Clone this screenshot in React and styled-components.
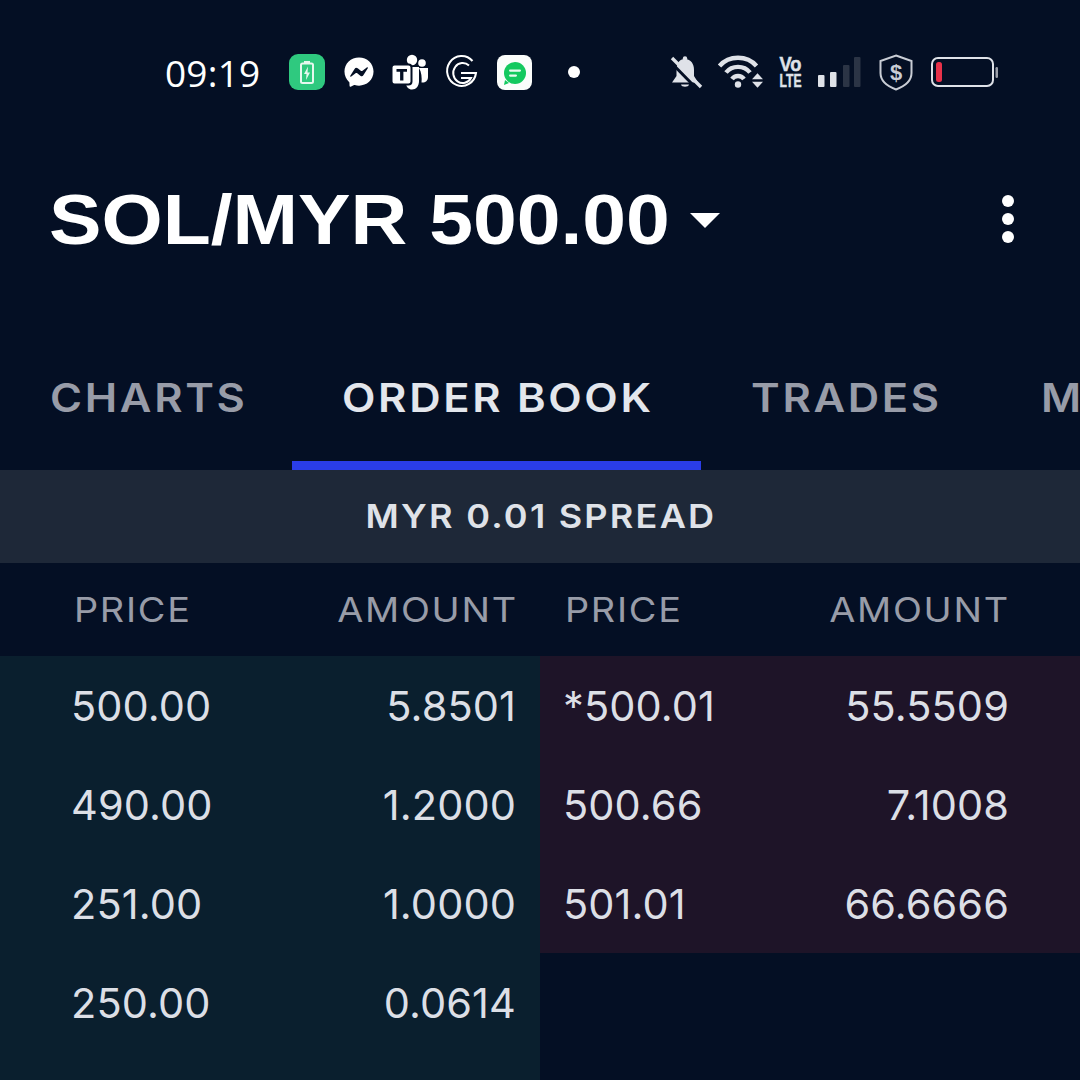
import React from "react";
import styled, { createGlobalStyle } from "styled-components";
import { FaFacebookMessenger } from "react-icons/fa";

const Global = createGlobalStyle`
  html, body { margin: 0; padding: 0; background: #040f24; }
  * { box-sizing: border-box; }
`;

const Page = styled.div`
  width: 1080px; height: 1080px; overflow: hidden; background: #040f24;
  color: #fff; font-family: Inter, "Liberation Sans", sans-serif;
  display: flex; flex-direction: column;
`;
const StatusBar = styled.div`
  height: 145px; display: flex; align-items: center; padding: 0 0 1px 165px;
`;
const Time = styled.span`
  font-size: 37px; font-weight: 500; width: 95px; letter-spacing: 0.2px; white-space: nowrap; color: #fff;
  font-family: "Open Sans", Inter, sans-serif;
`;
const Slot = styled.span`
  display: flex; align-items: center; justify-content: center; flex: none;
  width: ${p => p.$w}px; margin-left: ${p => p.$ml}px; color: ${p => p.$c || "#fff"};
  svg { overflow: visible; }
`;
const TitleRow = styled.div`
  height: 148px; display: flex; align-items: center; padding: 0 66px 0 49px;
`;
const Title = styled.h1`
  margin: 0; width: 618px; font-family: "Liberation Sans", Arial, sans-serif;
  font-size: 71px; font-weight: 700; white-space: nowrap; line-height: 1;
  transform: scaleX(1.108); transform-origin: left center;
`;
const Caret = styled.span`
  width: 0; height: 0; margin-left: 23px; margin-top: 2px;
  border-left: 15px solid transparent; border-right: 15px solid transparent; border-top: 15px solid #fff;
`;
const Dots = styled.div`
  margin-left: auto; display: flex; flex-direction: column; gap: 6px;
`;
const Dot = styled.span`
  width: 12px; height: 12px; border-radius: 50%; background: #fff;
`;
const Tabs = styled.div`
  height: 177px; display: flex; white-space: nowrap;
`;
const Tab = styled.div`
  flex: none; width: ${p => p.$w}px; height: 100%; padding: 80px 0 0 50px;
  color: ${p => (p.$active ? "#e3e6ec" : "#989ca8")};
  border-bottom: 9px solid ${p => (p.$active ? "#2a3de8" : "transparent")};
`;
const TabLabel = styled.span`
  display: inline-block; font-size: 39px; font-weight: 600; letter-spacing: 2.4px; line-height: 50px;
  transform: scaleX(1.115); transform-origin: left center;
`;
const Spread = styled.div`
  height: 93px; background: #1e2838; color: #dfe2e8; display: flex; align-items: center; justify-content: center;
  padding-left: 2px;
`;
const SpreadLabel = styled.span`
  font-size: 32.5px; font-weight: 600; letter-spacing: 2px; transform: scaleX(1.11);
`;
const Book = styled.div`
  display: grid; grid-template-columns: 540px 540px; flex: 1; min-height: 0;
`;
const Side = styled.div`
  min-width: 0;
`;
const HeadRow = styled.div`
  height: 93px; display: flex; justify-content: space-between; align-items: center; color: #989ca8;
  padding: ${p => (p.$side === "bid" ? "0 22px 0 74px" : "0 70px 0 25px")};
`;
const HeadLabel = styled.span`
  font-size: 33.5px; font-weight: 400; letter-spacing: 1.5px;
  transform: scaleX(1.13); transform-origin: ${p => p.$end ? "right" : "left"} center;
`;
const Rows = styled.div`
  background: ${p => (p.$side === "bid" ? "#0a1f2e" : "#1e1428")};
  padding: ${p => (p.$side === "bid" ? "0 24px 0 71px" : "0 71px 0 23px")};
  min-height: ${p => (p.$side === "bid" ? "424px" : "0")};
`;
const Row = styled.div`
  height: 99px; display: flex; justify-content: space-between; align-items: center;
  font-size: 41.5px; font-weight: 400; color: #dcdfe6; letter-spacing: 0.1px;
`;

const bids = [["500.00", "5.8501"], ["490.00", "1.2000"], ["251.00", "1.0000"], ["250.00", "0.0614"]];
const asks = [["*500.01", "55.5509"], ["500.66", "7.1008"], ["501.01", "66.6666"]];

const ChargeTile = () => (
  <svg width="36" height="36" viewBox="0 0 36 36">
    <rect width="36" height="36" rx="9" fill="#2fc97f" />
    <rect x="15" y="7" width="6" height="3" fill="#e6f8ee" />
    <rect x="12" y="9.5" width="12" height="19.5" rx="1.5" fill="none" stroke="#e6f8ee" strokeWidth="2" />
    <path d="M19 12.5 L15 20 H17.5 L17 26 L21 18.5 H18.5 Z" fill="#e6f8ee" />
  </svg>
);
const TeamsMark = () => (
  <svg width="37" height="36" viewBox="0 0 37 36" fill="#fff">
    <circle cx="20" cy="6" r="5.2" />
    <circle cx="30" cy="9" r="3.8" />
    <path d="M27 14 H36 V23 C36 27 33 29 29.5 28.5 C30 24 29.5 18 27 14 Z" />
    <path d="M14 13 H27 V27 C27 32 24 35.5 20 35.5 C16.5 35.5 14.5 33 14 30 Z" />
    <rect x="-0.5" y="10.5" width="20" height="20" rx="3" fill="#fff" stroke="#040f24" strokeWidth="2" />
    <path d="M4.5 15 H15 V17.8 H11.4 V26.5 H8.1 V17.8 H4.5 Z" fill="#040f24" />
  </svg>
);
const GMark = () => (
  <svg width="30" height="33" viewBox="0 0 30 33" fill="none" stroke="#fff" strokeWidth="2">
    <path d="M25.5 5 A14.5 15 0 1 0 29 17 H14" />
    <path d="M22 9.5 A9.5 10 0 1 0 24 22 H14" />
  </svg>
);
const ChatTile = () => (
  <svg width="35" height="35" viewBox="0 0 35 35">
    <rect width="35" height="35" rx="8" fill="#fbfdfb" />
    <circle cx="18" cy="18" r="11" fill="#14c95f" />
    <path d="M8 25 L7 30 L12 28 Z" fill="#14c95f" />
    <rect x="12" y="14.5" width="12" height="2.2" rx="1.1" fill="#e8fbef" />
    <rect x="12" y="19.5" width="8" height="2.2" rx="1.1" fill="#e8fbef" />
  </svg>
);
const BellOff = () => (
  <svg width="32" height="33" viewBox="0 0 32 33">
    <circle cx="15" cy="2.5" r="2.2" fill="#dfe2e8" />
    <path d="M15 3 C8 3 6.5 9 6.5 15 V20 L2 26.5 H28 L24 20 V14 C24 8 21 3 15 3 Z" fill="#dfe2e8" />
    <path d="M11 28.5 H19 C18.5 31.5 11.5 31.5 11 28.5 Z" fill="#dfe2e8" />
    <path d="M1 6.5 L27 33" stroke="#040f24" strokeWidth="3" />
    <path d="M2 2 L31 31" stroke="#dfe2e8" strokeWidth="3.4" />
  </svg>
);
const WifiIcon = () => (
  <svg width="46" height="34" viewBox="0 0 46 34" fill="none" stroke="#dfe2e8" strokeWidth="4.4">
    <path d="M1.5 11 C11 0 29 0 38.5 11" />
    <path d="M8 17.5 C14 10 26 10 32 17.5" />
    <path d="M14 24 C17 20 23 20 26 24" />
    <circle cx="20" cy="29.5" r="3.2" fill="#dfe2e8" stroke="none" />
    <path d="M34 24.3 H45 L39.5 18.3 Z M34 26.7 H45 L39.5 32.7 Z" fill="#dfe2e8" stroke="none" />
  </svg>
);
const VoLte = () => (
  <svg width="23" height="33" viewBox="0 0 23 33" fill="#dfe2e8" stroke="#dfe2e8" strokeWidth="0.5" fontFamily="Liberation Sans" fontWeight="700">
    <text x="0.5" y="15" fontSize="20" textLength="22" lengthAdjust="spacingAndGlyphs">Vo</text>
    <text x="0.5" y="31" fontSize="18.5" textLength="22" lengthAdjust="spacingAndGlyphs">LTE</text>
  </svg>
);
const Signal = () => (
  <svg width="43" height="32" viewBox="0 0 43 32">
    <rect x="0" y="19" width="6.5" height="12" rx="1" fill="#dfe2e8" />
    <rect x="12" y="16" width="6.5" height="15" rx="1" fill="#dfe2e8" />
    <rect x="25" y="9" width="6.5" height="22" rx="1" fill="#2b3445" />
    <rect x="36" y="1" width="6.5" height="30" rx="1" fill="#2b3445" />
  </svg>
);
const Shield = () => (
  <svg width="34" height="37" viewBox="0 0 34 37">
    <path d="M17 1.5 L32.5 7 V19 C32.5 27 25 32.5 17 35.5 C9 32.5 1.5 27 1.5 19 V7 Z" fill="none" stroke="#c9cdd5" strokeWidth="2" />
    <text x="17" y="26" fontSize="22" fontWeight="700" textAnchor="middle" fill="#c9cdd5" fontFamily="Liberation Sans">$</text>
  </svg>
);
const BatteryIcon = () => (
  <svg width="68" height="30" viewBox="0 0 68 30">
    <rect x="1" y="1" width="61" height="28" rx="6" fill="none" stroke="#dfe2e8" strokeWidth="2" />
    <rect x="5" y="5" width="6" height="20" rx="2.5" fill="#e8324a" />
    <rect x="64.5" y="10" width="2.5" height="11" rx="1.2" fill="#9a9ea8" />
  </svg>
);

export default function App() {
  return (
    <Page>
      <Global />
      <StatusBar>
        <Time>09:19</Time>
        <Slot $w={36} $ml={29}><ChargeTile /></Slot>
        <Slot $w={30} $ml={19}><FaFacebookMessenger size={30} /></Slot>
        <Slot $w={37} $ml={18}><TeamsMark /></Slot>
        <Slot $w={30} $ml={18}><GMark /></Slot>
        <Slot $w={35} $ml={20}><ChatTile /></Slot>
        <Slot $w={14} $ml={35}><Dot /></Slot>
        <Slot $w={32} $ml={89}><BellOff /></Slot>
        <Slot $w={46} $ml={16}><WifiIcon /></Slot>
        <Slot $w={23} $ml={15}><VoLte /></Slot>
        <Slot $w={43} $ml={16}><Signal /></Slot>
        <Slot $w={34} $ml={18}><Shield /></Slot>
        <Slot $w={68} $ml={18}><BatteryIcon /></Slot>
      </StatusBar>
      <TitleRow>
        <Title>SOL/MYR 500.00</Title>
        <Caret />
        <Dots><Dot /><Dot /><Dot /></Dots>
      </TitleRow>
      <Tabs>
        <Tab $w={292}><TabLabel>CHARTS</TabLabel></Tab>
        <Tab $w={409} $active><TabLabel>ORDER BOOK</TabLabel></Tab>
        <Tab $w={290}><TabLabel>TRADES</TabLabel></Tab>
        <Tab $w={300}><TabLabel>MY ORDERS</TabLabel></Tab>
      </Tabs>
      <Spread><SpreadLabel>MYR 0.01 SPREAD</SpreadLabel></Spread>
      <Book>
        <Side>
          <HeadRow $side="bid"><HeadLabel>PRICE</HeadLabel><HeadLabel $end>AMOUNT</HeadLabel></HeadRow>
          <Rows $side="bid">
            {bids.map(r => <Row key={r[0]}><span>{r[0]}</span><span>{r[1]}</span></Row>)}
          </Rows>
        </Side>
        <Side>
          <HeadRow $side="ask"><HeadLabel>PRICE</HeadLabel><HeadLabel $end>AMOUNT</HeadLabel></HeadRow>
          <Rows $side="ask">
            {asks.map(r => <Row key={r[0]}><span>{r[0]}</span><span>{r[1]}</span></Row>)}
          </Rows>
        </Side>
      </Book>
    </Page>
  );
}
